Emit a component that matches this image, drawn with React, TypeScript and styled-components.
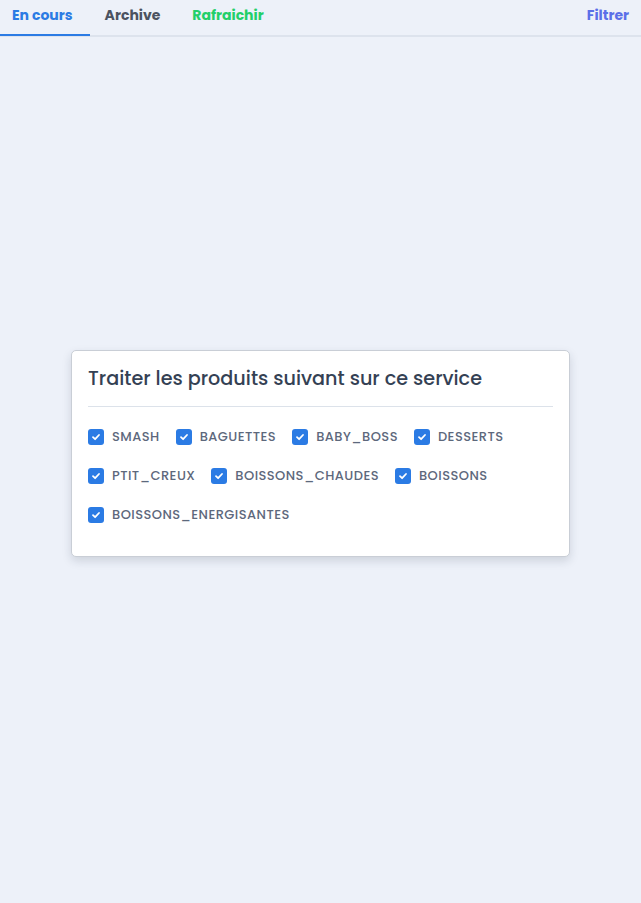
import React from 'react';
import styled, { createGlobalStyle } from 'styled-components';

const GlobalStyle = createGlobalStyle`
  html, body {
    margin: 0;
    padding: 0;
    background: #edf1f9;
    font-family: Poppins, Inter, "Noto Sans", sans-serif;
  }
  #root {
    min-height: 100vh;
  }
`;

const Page = styled.div`
  min-height: 100vh;
  display: flex;
  flex-direction: column;
  background: #edf1f9;
`;

const TabBar = styled.nav`
  display: flex;
  align-items: stretch;
  gap: 3px;
  height: 37px;
  border-bottom: 2px solid #dde3ed;
  box-sizing: border-box;
`;

interface ITab {
  active?: boolean;
  tone: string;
}
const Tab = styled.div<ITab>`
  display: flex;
  align-items: center;
  padding: 0 17px 3px 12px;
  margin-bottom: -1px;
  font-size: 14px;
  font-weight: 700;
  color: ${(props) => props.tone};
  border-bottom: 2px solid ${(props) => (props.active ? '#2b7be4' : 'transparent')};
  &:last-child {
    padding-right: 12px;
  }
`;

const Spacer = styled.div`
  flex: 1;
`;

const Center = styled.main`
  flex: 1;
  display: flex;
  align-items: center;
  justify-content: center;
  padding-bottom: 33px;
`;

const Card = styled.section`
  width: 499px;
  box-sizing: border-box;
  background: #fff;
  border: 1px solid #c9ced6;
  border-radius: 5px;
  box-shadow: 0 4px 10px rgba(30, 41, 59, 0.15);
  padding: 14px 16px 22px;
`;

const Title = styled.h2`
  margin: 0;
  font-size: 19.2px;
  font-weight: 500;
  color: #344154;
  line-height: 28px;
  padding-bottom: 13px;
  border-bottom: 1px solid #dce2ea;
`;

const Options = styled.div`
  display: flex;
  flex-wrap: wrap;
  column-gap: 16px;
  padding-top: 10px;
`;

const Option = styled.label`
  display: flex;
  align-items: center;
  gap: 8px;
  height: 39px;
  font-size: 13px;
  font-weight: 500;
  letter-spacing: 0.45px;
  color: #5d687c;
`;

const Box = styled.span`
  width: 16px;
  height: 16px;
  border-radius: 3px;
  background: #2b7be4;
  display: flex;
  align-items: center;
  justify-content: center;
`;

const products = [
  'SMASH',
  'BAGUETTES',
  'BABY_BOSS',
  'DESSERTS',
  'PTIT_CREUX',
  'BOISSONS_CHAUDES',
  'BOISSONS',
  'BOISSONS_ENERGISANTES',
];

const Check = () => (
  <svg width="10" height="10" viewBox="0 0 10 10">
    <path d="M2 5.2 L4.1 7.2 L8 3" fill="none" stroke="#fff" strokeWidth="1.8" strokeLinecap="round" strokeLinejoin="round" />
  </svg>
);

const App = () => (
  <Page>
    <GlobalStyle />
    <TabBar>
      <Tab active tone="#2b7be4">En cours</Tab>
      <Tab tone="#4b5260">Archive</Tab>
      <Tab tone="#22cf6a">Rafraichir</Tab>
      <Spacer />
      <Tab tone="#5a6fe8">Filtrer</Tab>
    </TabBar>
    <Center>
      <Card>
        <Title>Traiter les produits suivant sur ce service</Title>
        <Options>
          {products.map((p) => (
            <Option key={p}>
              <Box>
                <Check />
              </Box>
              {p}
            </Option>
          ))}
        </Options>
      </Card>
    </Center>
  </Page>
);

export default App;
